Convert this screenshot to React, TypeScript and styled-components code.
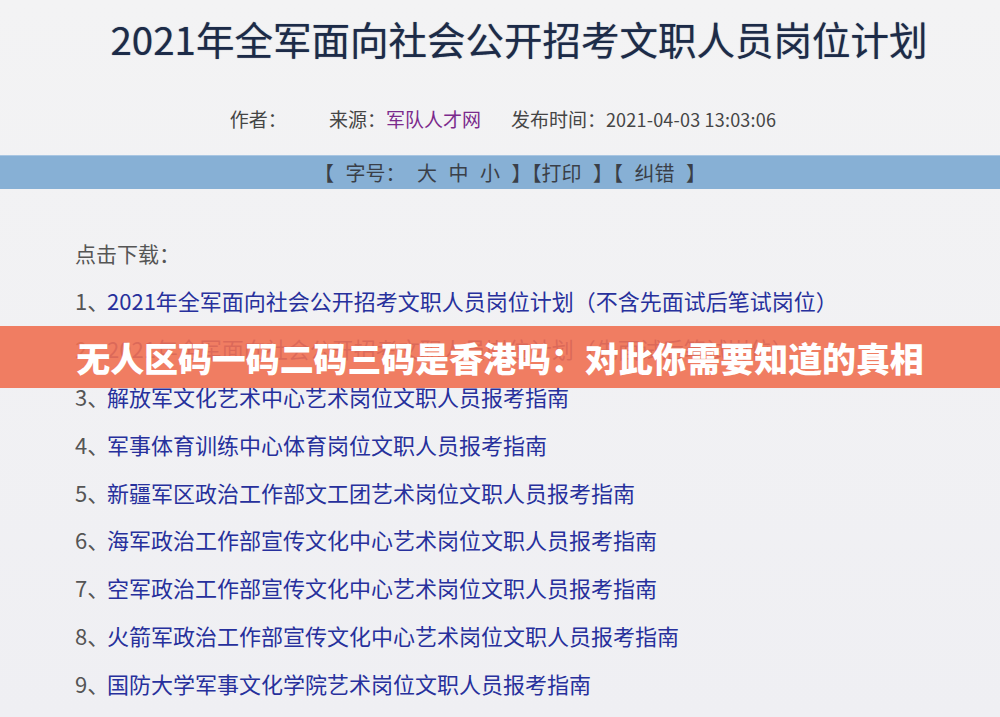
import React from "react";
import styled, { createGlobalStyle } from "styled-components";

const Global = createGlobalStyle`
  html, body { margin: 0; padding: 0; }
  body {
    background: #f1f1f3;
    font-family: "Noto Sans CJK SC", "Noto Sans", sans-serif;
    width: 1000px;
    height: 717px;
    overflow: hidden;
  }
`;

const Page = styled.div`
  position: relative;
  width: 1000px;
  height: 717px;
  overflow: hidden;
  background: linear-gradient(#f3f3f4, #efeff3);
`;

const Title = styled.h1`
  margin: 0;
  padding: 12px 0 0 38px;
  height: 66px;
  box-sizing: border-box;
  text-align: center;
  font-size: 38.5px;
  line-height: 52px;
  font-weight: 400;
  color: #1c2b48;
  letter-spacing: 0px;
  text-shadow: 0 0 1px rgba(28, 43, 72, 0.6);
`;

const Meta = styled.div`
  display: flex;
  justify-content: center;
  align-items: center;
  height: 40px;
  margin-top: 32px;
  padding-left: 6px;
  font-size: 19px;
  color: #454545;
`;

const MetaItem = styled.span<{ $gap?: number }>`
  margin-right: ${(p) => p.$gap ?? 0}px;
  white-space: pre;
`;

const Source = styled.span`
  color: #7b2a8c;
`;

const DateText = styled.span`
  font-size: 18px;
  letter-spacing: 0.2px;
`;

const ToolBar = styled.div`
  margin-top: 17px;
  height: 33px;
  background: #87b0d5;
  border-top: 1px solid #a9c6e2;
  display: flex;
  justify-content: center;
  align-items: center;
  padding-left: 20px;
  font-size: 20px;
  color: #3a3f48;
  white-space: pre;
  word-spacing: 7px;
`;

const Content = styled.div`
  padding: 41px 0 0 75px;
`;

const Heading = styled.div`
  height: 47px;
  line-height: 47px;
  font-size: 21px;
  color: #555;
`;

const List = styled.ol`
  list-style: none;
  margin: 0;
  padding: 0;
`;

const Item = styled.li`
  height: 47.9px;
  line-height: 47.9px;
  font-size: 22px;
  white-space: nowrap;
  display: flex;
`;

const Num = styled.span`
  color: #555;
  width: 32px;
  flex: none;
`;

const Link = styled.span`
  color: #27309c;
`;

const Banner = styled.div`
  position: absolute;
  left: 0;
  right: 0;
  top: 326px;
  height: 62px;
  background: rgba(240, 112, 82, 0.9);
  display: flex;
  align-items: center;
  justify-content: center;
`;

const BannerText = styled.div`
  color: #ffffff;
  font-size: 34px;
  font-weight: 900;
  letter-spacing: -0.1px;
  line-height: 1;
  padding-top: 2px;
`;

const items = [
  "2021年全军面向社会公开招考文职人员岗位计划（不含先面试后笔试岗位）",
  "2021年全军面向社会公开招考文职人员岗位计划（先面试后笔试岗位）",
  "解放军文化艺术中心艺术岗位文职人员报考指南",
  "军事体育训练中心体育岗位文职人员报考指南",
  "新疆军区政治工作部文工团艺术岗位文职人员报考指南",
  "海军政治工作部宣传文化中心艺术岗位文职人员报考指南",
  "空军政治工作部宣传文化中心艺术岗位文职人员报考指南",
  "火箭军政治工作部宣传文化中心艺术岗位文职人员报考指南",
  "国防大学军事文化学院艺术岗位文职人员报考指南",
];

export default function App() {
  return (
    <>
      <Global />
      <Page>
        <Title>2021年全军面向社会公开招考文职人员岗位计划</Title>
        <Meta>
          <MetaItem $gap={42}>作者：</MetaItem>
          <MetaItem $gap={30}>
            来源：<Source>军队人才网</Source>
          </MetaItem>
          <MetaItem>
            发布时间：<DateText>2021-04-03 13:03:06</DateText>
          </MetaItem>
        </Meta>
        <ToolBar>【 字号： 大 中 小 】【打印 】【 纠错 】</ToolBar>
        <Content>
          <Heading>点击下载：</Heading>
          <List>
            {items.map((t, i) => (
              <Item key={i}>
                <Num>{i + 1}、</Num>
                <Link>{t}</Link>
              </Item>
            ))}
          </List>
        </Content>
        <Banner>
          <BannerText>无人区码一码二码三码是香港吗：对此你需要知道的真相</BannerText>
        </Banner>
      </Page>
    </>
  );
}
